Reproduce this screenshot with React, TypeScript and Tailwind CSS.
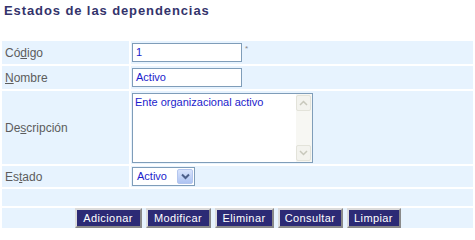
import React from "react";

const font = "font-['Liberation_Sans',Arial,sans-serif]";

function Label({ children }: { children: React.ReactNode }) {
  return (
    <div className="flex items-center bg-[#e7f3fe] pl-[3px] text-[12px] text-[#5c5c5c]">
      {children}
    </div>
  );
}

function SelectArrow() {
  return (
    <span className="flex h-[15px] w-[16px] items-center justify-center rounded-[2px] border border-[#b4c6ee] bg-gradient-to-b from-[#d9e4fc] to-[#aec3f2]">
      <svg width="9" height="7" viewBox="0 0 9 7">
        <path d="M1 1.5 L4.5 5 L8 1.5" fill="none" stroke="#4c5f8a" strokeWidth="2" />
      </svg>
    </span>
  );
}

function ScrollBtn({ up }: { up?: boolean }) {
  return (
    <span className="flex h-[16px] w-[15px] items-center justify-center rounded-[2px] border border-[#e3e3da] bg-[#f3f3ee]">
      <svg width="9" height="6" viewBox="0 0 9 6">
        <path
          d={up ? "M1 5 L4.5 1.5 L8 5" : "M1 1 L4.5 4.5 L8 1"}
          fill="none"
          stroke="#c8c8bc"
          strokeWidth="1.5"
        />
      </svg>
    </span>
  );
}

const buttons = [
  { text: "Adicionar", w: "w-[67px]" },
  { text: "Modificar", w: "w-[65px]" },
  { text: "Eliminar", w: "w-[59px]" },
  { text: "Consultar", w: "w-[65px]" },
  { text: "Limpiar", w: "w-[54px]" },
];

export default function App() {
  return (
    <div className={`h-[235px] w-[475px] bg-white ${font}`}>
      <div className="h-[41px] pl-[4px] pt-[3px]">
        <h1 className="text-[13px] font-bold leading-[15px] tracking-[0.9px] text-[#33336b]">
          Estados de las dependencias
        </h1>
      </div>

      <div className="grid grid-cols-[127px_1fr] gap-[2px] px-[2px]">
        <Label>
          Có<u>d</u>igo
        </Label>
        <div className="flex h-[23px] items-center bg-[#e7f3fe] pl-[1px]">
          <div className="flex h-[19px] w-[110px] items-center border border-[#7f9db9] bg-white pl-[3px] text-[11px] text-[#1c1ccc]">
            1
          </div>
          <span className="-mt-[8px] ml-[3px] text-[8px] text-[#888]">*</span>
        </div>

        <Label>
          <u>N</u>ombre
        </Label>
        <div className="flex h-[23px] items-center bg-[#e7f3fe] pl-[1px]">
          <div className="flex h-[19px] w-[110px] items-center border border-[#7f9db9] bg-white pl-[3px] text-[11px] text-[#1c1ccc]">
            Activo
          </div>
        </div>

        <Label>
          De<u>s</u>cripción
        </Label>
        <div className="flex h-[73px] items-center bg-[#e7f3fe] pl-[1px]">
          <div className="flex h-[70px] w-[181px] border border-[#7f9db9] bg-white">
            <div className="flex-1 pl-[2px] pt-[2px] text-[11px] leading-[13px] text-[#1c1ccc]">
              Ente organizacional activo
            </div>
            <div className="flex w-[16px] flex-col justify-between bg-[#f7f7f3] py-[1px]">
              <ScrollBtn up />
              <ScrollBtn />
            </div>
          </div>
        </div>

        <Label>
          Es<u>t</u>ado
        </Label>
        <div className="flex h-[21px] items-center bg-[#e7f3fe] pl-[1px]">
          <div className="flex h-[19px] w-[63px] items-center justify-between border border-[#7f9db9] bg-white pl-[4px] pr-[1px] text-[11px] text-[#1c1ccc]">
            Activo
            <SelectArrow />
          </div>
        </div>

        <div className="col-span-2 h-[17px] bg-[#e7f3fe]" />

        <div className="col-span-2 flex h-[20px] justify-center gap-[4px] bg-[#e7f3fe]">
          {buttons.map((b) => (
            <button
              key={b.text}
              className={`${b.w} h-[20px] border-2 border-b-[#8a8a8a] border-l-[#dcdcdc] border-r-[#8a8a8a] border-t-[#dcdcdc] bg-[#2c2a75] text-[11px] tracking-[0.4px] text-white`}
            >
              {b.text}
            </button>
          ))}
        </div>
      </div>
    </div>
  );
}
